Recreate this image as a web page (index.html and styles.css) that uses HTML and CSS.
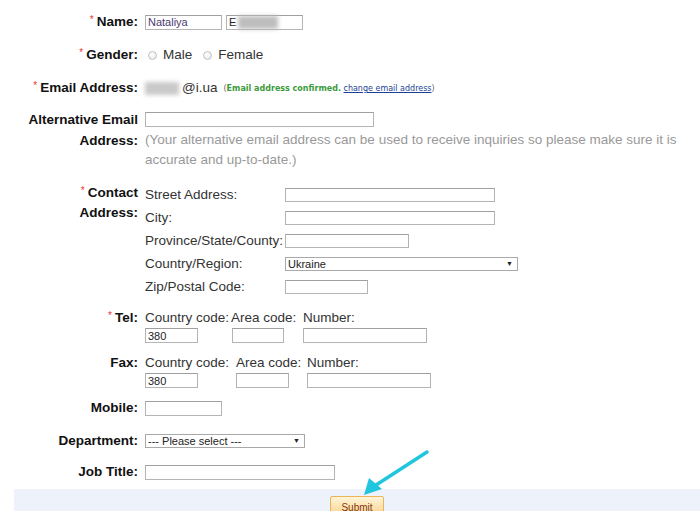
FILE: index.html
```html
<!DOCTYPE html>
<html lang="en">
<head>
    <meta charset="UTF-8">
    <meta name="viewport" content="width=device-width, initial-scale=1.0">
    <title>Profile</title>
    <link rel="stylesheet" href="styles.css">
</head>
<body>
    <form class="profile">
        <div class="row">
            <label class="label"><span class="req">*</span>Name:</label>
            <div class="field">
                <input class="input w77 autofill" type="text" value="Nataliya">
                <div class="input w77 fake">E<span class="blur blur-name"></span></div>
            </div>
        </div>

        <div class="row">
            <label class="label"><span class="req">*</span>Gender:</label>
            <div class="field">
                <span class="radio"></span><span class="opt">Male</span>
                <span class="radio"></span><span class="opt">Female</span>
            </div>
        </div>

        <div class="row mb11">
            <label class="label"><span class="req">*</span>Email Address:</label>
            <div class="field">
                <span class="blur blur-mail"></span><span>@i.ua</span>
                <span class="note">(<b>Email address confirmed.</b> <a href="#">change email address</a>)</span>
            </div>
        </div>

        <div class="row">
            <label class="label label-tall">Alternative Email<br>Address:</label>
            <div>
                <div class="field first-line"><input class="input w229" type="text"></div>
                <p class="hint">(Your alternative email address can be used to receive inquiries so please make sure it is accurate and up-to-date.)</p>
            </div>
        </div>

        <div class="row mb10">
            <label class="label"><span class="req">*</span>Contact<br>Address:</label>
            <div class="address">
                <div class="sub"><span>Street Address:</span><input class="input short w210" type="text"></div>
                <div class="sub"><span>City:</span><input class="input short w210" type="text"></div>
                <div class="sub"><span>Province/State/County:</span><input class="input short w124" type="text"></div>
                <div class="sub">
                    <span>Country/Region:</span>
                    <div class="select w233"><select><option>Ukraine</option></select></div>
                </div>
                <div class="sub"><span>Zip/Postal Code:</span><input class="input short w83" type="text"></div>
            </div>
        </div>

        <div class="row mb10">
            <label class="label"><span class="req">*</span>Tel:</label>
            <div class="phone">
                <div class="pcol c86"><span>Country code:</span><input class="input w53" type="text" value="380"></div>
                <div class="pcol c72"><span>Area code:</span><input class="input w52 shift" type="text"></div>
                <div class="pcol"><span>Number:</span><input class="input w124" type="text"></div>
            </div>
        </div>

        <div class="row mb10">
            <label class="label">Fax:</label>
            <div class="phone">
                <div class="pcol c91"><span>Country code:</span><input class="input w53" type="text" value="380"></div>
                <div class="pcol c71"><span>Area code:</span><input class="input w53" type="text"></div>
                <div class="pcol"><span>Number:</span><input class="input w124" type="text"></div>
            </div>
        </div>

        <div class="row">
            <label class="label">Mobile:</label>
            <div class="field"><input class="input w77" type="text"></div>
        </div>

        <div class="row mb11">
            <label class="label">Department:</label>
            <div class="field">
                <div class="select w160"><select><option>--- Please select ---</option></select></div>
            </div>
        </div>

        <div class="row mb7">
            <label class="label">Job Title:</label>
            <div class="field"><input class="input w190" type="text"></div>
        </div>

        <div class="actions">
            <button class="submit" type="button">Submit</button>
        </div>
    </form>

    <!-- callout arrow drawn over the form -->
    <svg class="callout" width="700" height="511" viewBox="0 0 700 511">
        <line x1="427" y1="452" x2="373" y2="487" stroke="#1fc6dd" stroke-width="3.5" stroke-linecap="round"/>
        <polygon points="364,495 369,478 382,489" fill="#1fc6dd"/>
    </svg>
</body>
</html>
```

FILE: styles.css
```css
* {
    margin: 0;
    padding: 0;
    box-sizing: border-box;
}

body {
    font-family: "Liberation Sans", Arial, sans-serif;
    font-size: 13.5px;
    color: #333;
    background: #fff;
    position: relative;
    overflow: hidden;
}

.profile {
    margin-left: 14px;
    padding-top: 12px;
}

.row {
    display: grid;
    grid-template-columns: 124px 1fr;
    column-gap: 7px;
    line-height: 20px;
    margin-bottom: 13px;
}

.mb11 { margin-bottom: 11px; }
.mb10 { margin-bottom: 10px; }
.mb7 { margin-bottom: 7px; }

.label {
    text-align: right;
    font-weight: bold;
    color: #111;
}

.label-tall {
    line-height: 21px;
}

.req {
    color: #e53935;
    font-weight: normal;
    font-size: 10px;
    vertical-align: top;
    margin-right: 3px;
    position: relative;
    top: -2px;
}

.field {
    display: flex;
    align-items: center;
    height: 20px;
}

.first-line {
    height: 21px;
}

.input {
    height: 15px;
    border: 1px solid #b4b4b4;
    border-top-color: #a0a0a0;
    background: #fff;
    font-family: "Liberation Sans", Arial, sans-serif;
    font-size: 11px;
    color: #222;
    padding: 0 2px;
    outline: none;
}

.input.short { height: 14px; }

.autofill { color: #4b3a70; }

.fake {
    margin-left: 4px;
    display: flex;
    align-items: center;
    line-height: 13px;
}

.blur {
    display: inline-block;
    background: #bdbdbd;
    filter: blur(2px);
}

.blur-name {
    width: 40px;
    height: 13px;
    margin-left: 2px;
}

.blur-mail {
    width: 34px;
    height: 13px;
    margin-right: 3px;
    background: #c9c9c9;
}

.w52 { width: 52px; }
.w53 { width: 53px; }
.w77 { width: 77px; }
.w83 { width: 83px; }
.w124 { width: 124px; }
.w160 { width: 160px; }
.w190 { width: 190px; }
.w210 { width: 210px; }
.w229 { width: 229px; }
.w233 { width: 233px; }

.radio {
    width: 9px;
    height: 9px;
    border-radius: 50%;
    border: 1px solid #c2c2c2;
    background: radial-gradient(circle at 40% 35%, #fff, #e4e4e4);
    margin: 0 6px 0 3px;
}

.opt {
    margin-right: 8px;
}

.note {
    font-family: "DejaVu Sans", Verdana, sans-serif;
    font-size: 8px;
    color: #666;
    margin-left: 6px;
    padding-top: 2px;
}

.note b {
    color: #3c9a3c;
}

.note a {
    color: #1c3f94;
}

.hint {
    color: #999;
    line-height: 20px;
    padding-right: 14px;
}

.sub {
    display: grid;
    grid-template-columns: 140px auto;
    justify-content: start;
    align-items: center;
    height: 23px;
}

.select {
    position: relative;
    height: 14px;
}

.select select {
    appearance: none;
    -webkit-appearance: none;
    width: 100%;
    height: 14px;
    border: 1px solid #a9a9a9;
    background: #fff;
    font-family: "Liberation Sans", Arial, sans-serif;
    font-size: 11px;
    line-height: 12px;
    color: #222;
    padding: 0 2px;
    display: block;
    outline: none;
}

.select::after {
    content: "\25BC";
    position: absolute;
    right: 5px;
    top: 2px;
    font-size: 7px;
    line-height: 9px;
    color: #222;
    pointer-events: none;
}

.phone {
    display: flex;
}

.pcol {
    display: flex;
    flex-direction: column;
    line-height: 20px;
}

.c86 { width: 86px; }
.c72 { width: 72px; }
.c91 { width: 91px; }
.c71 { width: 71px; }

.shift { margin-left: 1px; }

.actions {
    background: #eef3fb;
    height: 40px;
    display: flex;
    justify-content: center;
    padding-top: 7px;
}

.submit {
    width: 54px;
    height: 21px;
    border: 1px solid #efb35c;
    border-radius: 2px;
    background: linear-gradient(#fff5d8, #fbd08c);
    font-family: "Liberation Sans", Arial, sans-serif;
    font-size: 10px;
    color: #7c3b14;
    padding-top: 2px;
}

.callout {
    position: absolute;
    left: 0;
    top: 0;
    pointer-events: none;
}
```
